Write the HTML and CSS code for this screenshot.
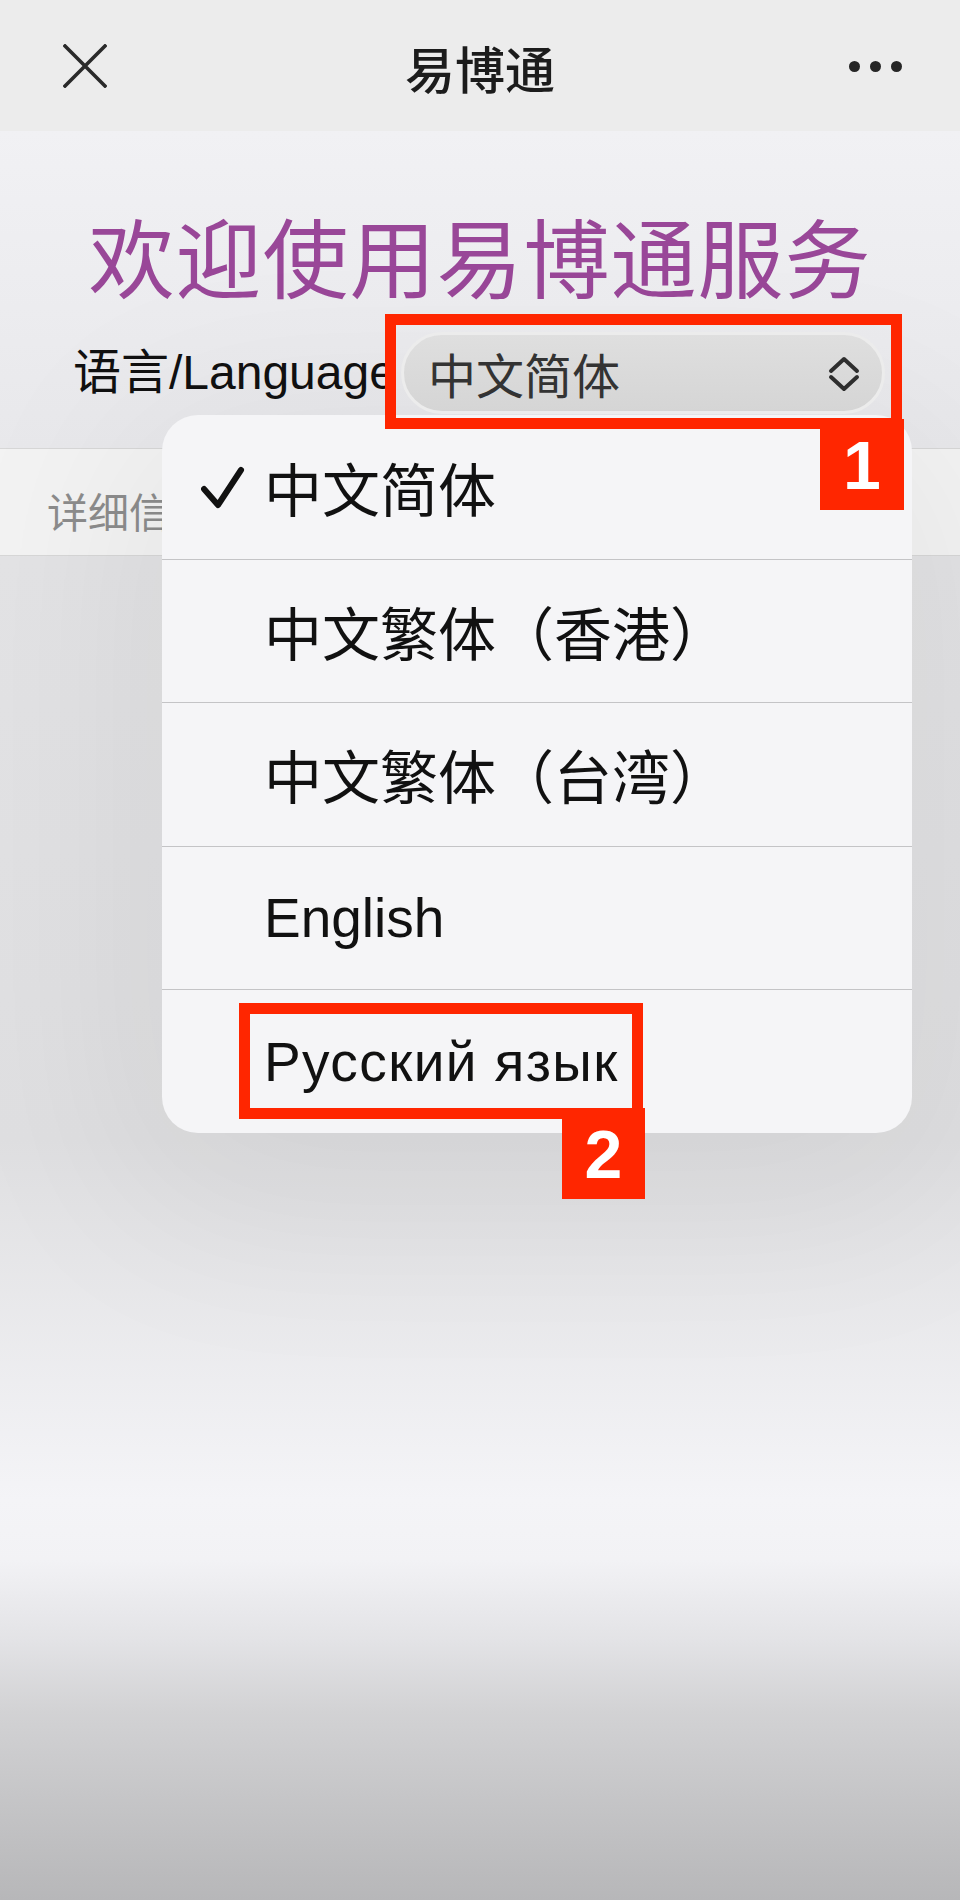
FILE: index.html
```html
<!DOCTYPE html>
<html lang="zh-CN">
<head>
<meta charset="utf-8">
<title>易博通</title>
<link rel="stylesheet" href="styles.css">
</head>
<body>
<div class="page">
  <header class="nav">
    <div class="nav-left">
      <svg class="icon-close" width="44" height="44" viewBox="0 0 44 44">
        <path d="M2 2 L42 42 M42 2 L2 42" stroke="#2a2a2a" stroke-width="3.6" stroke-linecap="square" fill="none"/>
      </svg>
    </div>
    <div class="nav-title">易博通</div>
    <div class="nav-right">
      <span class="dot"></span><span class="dot"></span><span class="dot"></span>
    </div>
  </header>

  <main class="content">
    <h1 class="welcome">欢迎使用易博通服务</h1>
    <div class="lang-row">
      <span class="lang-label">语言/Language</span>
      <div class="select">
        <span class="select-text">中文简体</span>
        <svg class="chevrons" width="32" height="36" viewBox="0 0 32 36">
          <path d="M3 15 L16 3 L29 15 M3 21 L16 33 L29 21" stroke="#2e2e2e" stroke-width="4" stroke-linecap="round" stroke-linejoin="round" fill="none"/>
        </svg>
        <span class="mark mark-1"></span>
        <span class="badge badge-1">1</span>
      </div>
    </div>
    <div class="detail-band">
      <span class="detail-text">详细信息</span>
    </div>
  </main>

  <ul class="menu">
    <li class="menu-item">
      <svg class="check" width="44" height="44" viewBox="0 0 44 44">
        <path d="M3 24 L17 40 L40 5" stroke="#111" stroke-width="6" stroke-linecap="round" stroke-linejoin="round" fill="none"/>
      </svg>
      <span class="cjk">中文简体</span>
    </li>
    <li class="menu-item"><span class="cjk">中文繁体（香港）</span></li>
    <li class="menu-item"><span class="cjk">中文繁体（台湾）</span></li>
    <li class="menu-item"><span class="latin">English</span></li>
    <li class="menu-item">
      <span class="latin ru">Русский язык</span>
      <span class="mark mark-2"></span>
      <span class="badge badge-2">2</span>
    </li>
  </ul>
</div>
</body>
</html>
```

FILE: styles.css
```css
* { box-sizing: border-box; }

html, body {
  margin: 0;
  padding: 0;
}

body {
  width: 960px;
  height: 1900px;
  overflow: hidden;
  font-family: "Liberation Sans", "Noto Sans CJK SC", sans-serif;
  color: #111;
}

.page {
  position: relative;
  width: 960px;
  height: 1900px;
  background: linear-gradient(to bottom,
    #ececec 0px, #ececec 131px,
    #f1f1f4 131px, #e8e8eb 448px,
    #e3e3e5 560px, #dfdfe1 1140px,
    #f4f4f7 1500px, #f2f2f5 1560px,
    #e3e3e6 1640px, #d2d2d4 1712px,
    #c3c3c5 1814px, #b7b7b9 1900px);
}

/* ---------- top navigation ---------- */
.nav {
  height: 131px;
  display: grid;
  grid-template-columns: 1fr auto 1fr;
  align-items: center;
  background: #ececec;
}

.nav-left {
  padding-left: 63px;
  display: flex;
  align-items: center;
  padding-top: 1px;
}

.nav-title {
  font-family: "Noto Sans CJK SC", sans-serif;
  font-size: 50px;
  font-weight: 500;
  color: #1c1c1c;
  line-height: 60px;
  padding-top: 2px;
}

.nav-right {
  justify-self: end;
  margin-right: 58px;
  display: flex;
  gap: 10px;
  padding-top: 2px;
}

.dot {
  width: 11px;
  height: 11px;
  border-radius: 50%;
  background: #262626;
}

/* ---------- main content ---------- */
.content {
  display: flex;
  flex-direction: column;
}

.welcome {
  margin: 69px 0 0;
  height: 110px;
  line-height: 110px;
  text-align: center;
  font-family: "Noto Sans CJK SC", sans-serif;
  font-size: 86px;
  font-weight: 400;
  color: #994798;
  letter-spacing: 1px;
}

.lang-row {
  margin-top: 22px;
  height: 82px;
  display: flex;
  align-items: center;
  padding-left: 73px;
}

.lang-label {
  flex: none;
  width: 328px;
  white-space: nowrap;
  font-size: 48px;
  color: #111;
  line-height: 82px;
}

.select {
  position: relative;
  z-index: 2;
  flex: none;
  width: 484px;
  height: 82px;
  border-radius: 42px;
  border: 3px solid #ececec;
  background: linear-gradient(to bottom, #dfdfdf, #d5d5d5);
  display: flex;
  align-items: center;
  justify-content: space-between;
  padding: 0 22px 0 24px;
}

.select-text {
  font-family: "Noto Sans CJK SC", sans-serif;
  font-size: 48px;
  color: #333;
  line-height: 60px;
}

.chevrons {
  flex: none;
  margin-top: 1px;
}

/* ---------- annotation marks ---------- */
.mark {
  position: absolute;
  border: 11px solid #ff2600;
  pointer-events: none;
}

.badge {
  position: absolute;
  background: #ff2600;
  color: #fff;
  font-family: "Liberation Sans", sans-serif;
  font-weight: 700;
  font-size: 68px;
  display: flex;
  align-items: center;
  justify-content: center;
  line-height: 1;
}

.mark-1 {
  left: -19px;
  top: -21px;
  width: 517px;
  height: 115px;
}

.badge-1 {
  left: 416px;
  top: 84px;
  width: 84px;
  height: 91px;
}

/* ---------- details band behind menu ---------- */
.detail-band {
  margin-top: 34px;
  height: 108px;
  background: #f3f3f3;
  border-top: 1px solid #d7d7d7;
  border-bottom: 1px solid #d7d7d7;
  display: flex;
  align-items: center;
  padding: 16px 0 0 47px;
}

.detail-text {
  font-family: "Noto Sans CJK SC", sans-serif;
  font-size: 41px;
  color: #8c8c8c;
}

/* ---------- dropdown menu overlay ---------- */
.menu {
  position: absolute;
  z-index: 1;
  left: 162px;
  top: 415px;
  width: 750px;
  margin: 0;
  padding: 0;
  list-style: none;
  background: #f5f5f7;
  border-radius: 36px;
  box-shadow: 0 40px 200px 40px rgba(0, 0, 0, 0.06);
}

.menu-item {
  position: relative;
  height: 143.6px;
  display: flex;
  align-items: center;
  padding-left: 102px;
  color: #111;
  border-top: 1px solid #c4c4c6;
}

.menu-item:first-child {
  border-top: none;
}

.cjk {
  font-family: "Noto Sans CJK SC", sans-serif;
  font-size: 58px;
  line-height: 70px;
}

.latin {
  font-family: "Liberation Sans", "Noto Sans CJK SC", sans-serif;
  font-size: 55px;
  line-height: 70px;
}

.ru {
  letter-spacing: 1.4px;
}

.check {
  position: absolute;
  left: 39px;
  top: 50px;
}

.mark-2 {
  left: 77px;
  top: 13px;
  width: 404px;
  height: 116px;
}

.badge-2 {
  left: 400px;
  top: 118px;
  width: 83px;
  height: 91px;
}
```
